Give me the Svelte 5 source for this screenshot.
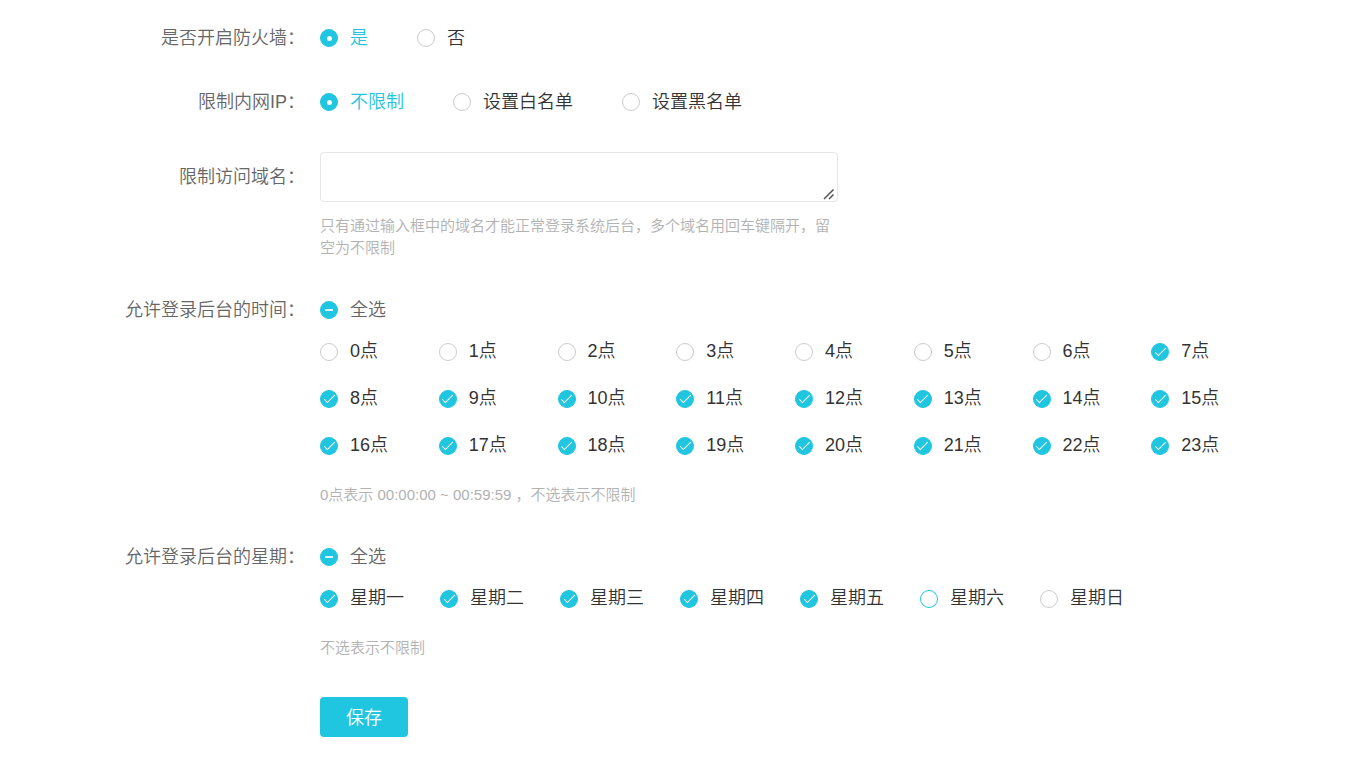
<script>
  let firewall = $state('on');
  let ipLimit = $state('none');
  let domains = $state('');

  const firewallOptions = [
    { value: 'on', label: '是' },
    { value: 'off', label: '否' },
  ];
  const ipOptions = [
    { value: 'none', label: '不限制' },
    { value: 'white', label: '设置白名单' },
    { value: 'black', label: '设置黑名单' },
  ];

  let hours = $state(Array.from({ length: 24 }, (_, i) => ({ label: `${i}点`, checked: i >= 7 })));
  let weeks = $state(
    ['一', '二', '三', '四', '五', '六', '日'].map((d, i) => ({
      label: `星期${d}`,
      checked: i < 5,
      active: i === 5,
    }))
  );

  const all = (list) => list.every((item) => item.checked);
  const some = (list) => list.some((item) => item.checked) && !all(list);

  function toggleAll(list, checked) {
    list.forEach((item) => (item.checked = checked));
  }
</script>

{#snippet checkGroup(list, kind)}
  <label class="choice check-all">
    <input
      type="checkbox"
      checked={all(list)}
      indeterminate={some(list)}
      onchange={(e) => toggleAll(list, e.currentTarget.checked)}
    />
    <span>全选</span>
  </label>
  <div class="checks {kind}">
    {#each list as item}
      <label class="choice">
        <input type="checkbox" class:active={item.active} bind:checked={item.checked} />
        <span>{item.label}</span>
      </label>
    {/each}
  </div>
{/snippet}

<form class="form" onsubmit={(e) => e.preventDefault()}>
  <div class="form-item" role="radiogroup" aria-labelledby="firewall-label">
    <div class="form-label" id="firewall-label">是否开启防火墙：</div>
    <div class="form-field radios">
      {#each firewallOptions as option}
        <label class="choice">
          <input type="radio" name="firewall" value={option.value} bind:group={firewall} />
          <span>{option.label}</span>
        </label>
      {/each}
    </div>
  </div>

  <div class="form-item" role="radiogroup" aria-labelledby="ip-label">
    <div class="form-label" id="ip-label">限制内网IP：</div>
    <div class="form-field radios">
      {#each ipOptions as option}
        <label class="choice">
          <input type="radio" name="ip" value={option.value} bind:group={ipLimit} />
          <span>{option.label}</span>
        </label>
      {/each}
    </div>
  </div>

  <div class="form-item domain">
    <label class="form-label" for="domains">限制访问域名：</label>
    <div class="form-field">
      <div class="textarea-wrap">
        <textarea id="domains" bind:value={domains}></textarea>
        <svg class="grip" viewBox="0 0 12 12" aria-hidden="true">
          <path d="M1 11 L10.5 1.5 M6 11 L10.5 6.5" />
        </svg>
      </div>
      <p class="tip">只有通过输入框中的域名才能正常登录系统后台，多个域名用回车键隔开，留空为不限制</p>
    </div>
  </div>

  <div class="form-item group" role="group" aria-labelledby="hours-label">
    <div class="form-label" id="hours-label">允许登录后台的时间：</div>
    <div class="form-field">
      {@render checkGroup(hours, 'hours')}
      <p class="tip">0点表示 00:00:00 ~ 00:59:59 ，不选表示不限制</p>
    </div>
  </div>

  <div class="form-item group" role="group" aria-labelledby="weeks-label">
    <div class="form-label" id="weeks-label">允许登录后台的星期：</div>
    <div class="form-field">
      {@render checkGroup(weeks, 'weeks')}
      <p class="tip">不选表示不限制</p>
    </div>
  </div>

  <div class="form-actions">
    <button type="submit">保存</button>
  </div>
</form>

<style>
  :global(body) { margin: 0; background: #fff; }
  .form {
    --primary: #20c6e0;
    padding: 22px 100px 24px 0;
    font-family: 'Liberation Sans', 'Noto Sans CJK SC', sans-serif;
    font-size: 18px;
    font-weight: 350;
    color: #333;
  }
  .form-item { display: flex; gap: 15px; margin-bottom: 32px; line-height: 32px; }
  .form-label { width: 305px; flex-shrink: 0; text-align: right; color: #666; }
  .form-field { flex: 1; min-width: 0; }

  .choice { display: flex; align-items: center; gap: 12px; white-space: nowrap; cursor: pointer; }
  .radios { display: flex; flex-wrap: wrap; column-gap: 49px; }

  input {
    appearance: none;
    display: grid;
    place-items: center;
    width: 18px;
    height: 18px;
    margin: 0;
    flex-shrink: 0;
    box-sizing: border-box;
    border: 1px solid #ccc;
    border-radius: 50%;
    background: #fff;
    cursor: pointer;
  }
  input:hover, input.active { border-color: var(--primary); }
  input:checked, input:indeterminate[type='checkbox'] { border-color: var(--primary); background: var(--primary); }
  input::after { content: none; box-sizing: border-box; }
  input[type='radio']:checked::after { content: ''; width: 5px; height: 5px; border-radius: 50%; background: #fff; }
  input[type='radio']:checked + span { color: var(--primary); }
  input[type='checkbox']:checked::after {
    content: '';
    width: 5px;
    height: 11px;
    border: solid #fff;
    border-width: 0 1px 1px 0;
    transform: translateY(-1px) rotate(45deg);
  }
  input[type='checkbox']:indeterminate::after {
    content: '';
    width: 8px;
    height: 2px;
    border: 0;
    background: #fff;
    opacity: 0.85;
    transform: none;
  }

  .domain { margin-top: 34px; line-height: 50px; }
  .domain .form-field { flex: 0 1 518px; }
  .textarea-wrap { position: relative; }
  textarea {
    display: block;
    width: 100%;
    height: 50px;
    padding: 8px 12px;
    box-sizing: border-box;
    border: 1px solid #e6e6e6;
    border-radius: 4px;
    outline: none;
    font: inherit;
    line-height: 24px;
    color: #333;
    resize: vertical;
  }
  textarea::-webkit-resizer { background: transparent; }
  .grip {
    position: absolute;
    right: 3px;
    bottom: 2px;
    width: 12px;
    height: 12px;
    fill: none;
    stroke: #555;
    stroke-width: 1.5;
    pointer-events: none;
  }
  .tip { margin: 13px 0 0; font-size: 15px; line-height: 22px; color: #b2b2b2; }

  .domain, .group { margin-bottom: 33px; }
  .group { line-height: 36px; }
  .check-all { color: #666; }
  .checks { display: grid; padding-bottom: 2px; line-height: 47px; }
  .hours { grid-template-columns: repeat(8, 1fr); }
  .weeks { grid-template-columns: repeat(auto-fill, 120px); }

  .form-actions { margin-top: 38px; padding-left: 320px; }
  button {
    width: 88px;
    height: 40px;
    padding: 0 0 2px;
    border: 0;
    border-radius: 4px;
    background: var(--primary);
    color: #fff;
    font: inherit;
    cursor: pointer;
  }
</style>
